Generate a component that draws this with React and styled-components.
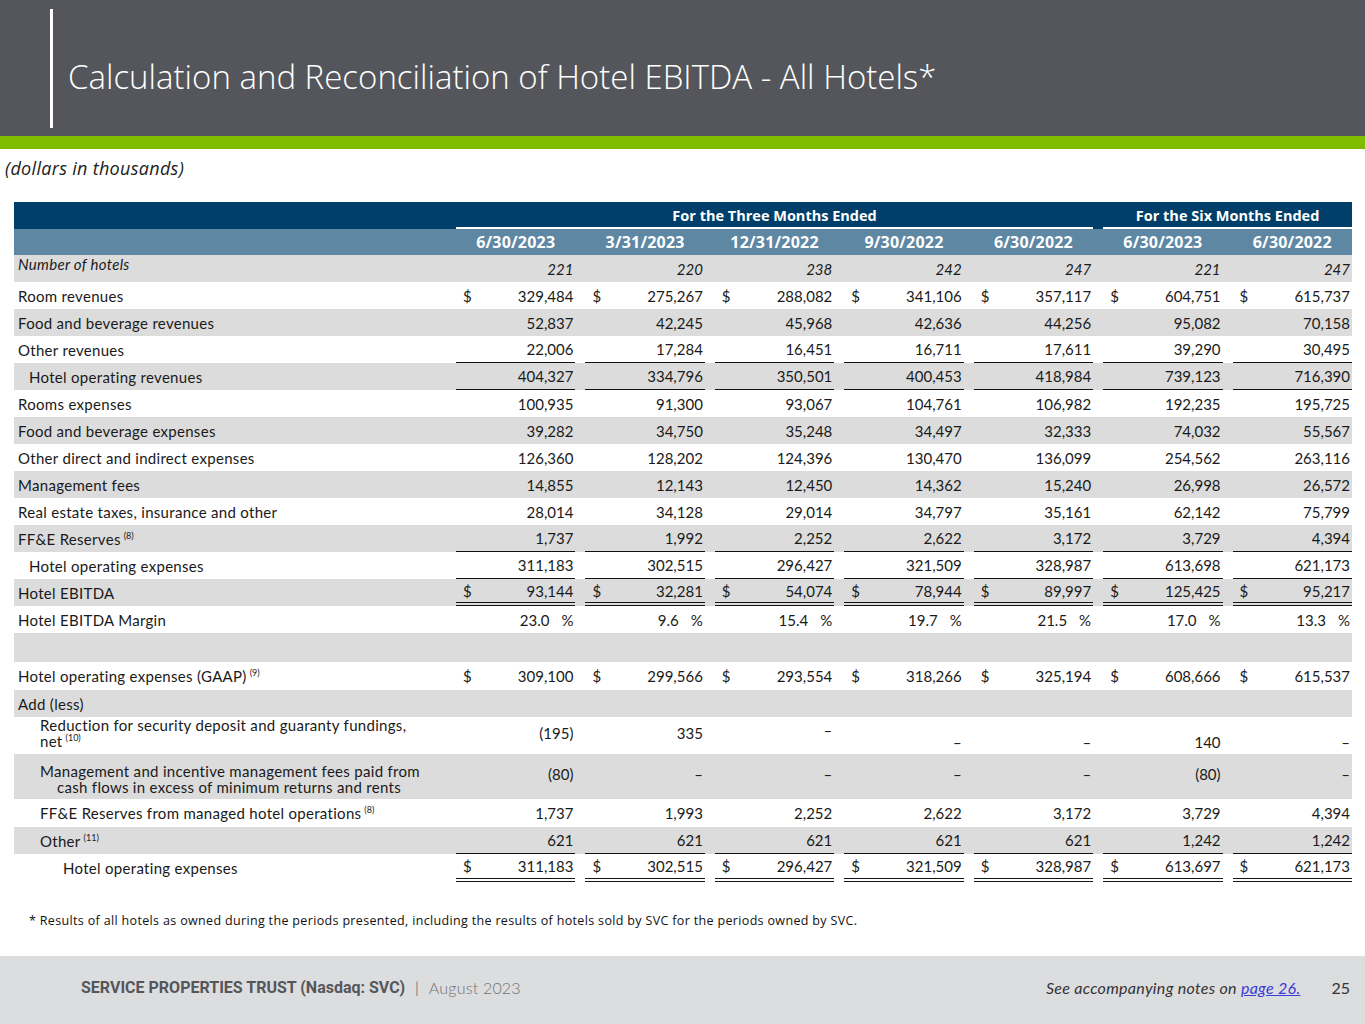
import React from 'react';
import styled, { createGlobalStyle } from 'styled-components';

const GlobalStyle = createGlobalStyle`
  html, body { margin: 0; padding: 0; background: #fff; }
  body { font-family: Lato, "Noto Sans", sans-serif; color: #1a1a1a; }
  * { box-sizing: border-box; }
`;

const Page = styled.div`
  width: 1365px;
  height: 1024px;
  display: flex;
  flex-direction: column;
  overflow: hidden;
`;

const Header = styled.header`
  height: 136px;
  background: #54565b;
  display: flex;
  align-items: center;
  padding-left: 50px;
`;

const Bar = styled.div`
  width: 3px;
  height: 119px;
  background: #fff;
  margin-right: 15px;
`;

const Title = styled.h1`
  margin: 0;
  padding-top: 16px;
  font-family: "Open Sans", sans-serif;
  font-weight: 300;
  font-size: 33px;
  color: #fff;
`;

const Accent = styled.div`
  height: 13px;
  background: #80bc00;
`;

const Subtitle = styled.div`
  padding: 7px 0 0 5px;
  font-family: "Open Sans", sans-serif;
  font-style: italic;
  font-size: 18px;
  letter-spacing: 0.3px;
  line-height: 24px;
  color: #222;
`;

const Table = styled.div`
  margin: 22px 0 0 14px;
  width: 1338px;
  display: flex;
  flex-direction: column;
`;

const GridRow = styled.div`
  display: grid;
  grid-template-columns: 432px repeat(7, 1fr);
  column-gap: 10px;
  height: ${p => p.$h || 27}px;
  background: ${p => p.$bg};
`;

const GroupCell = styled.div`
  grid-column: ${p => p.$col};
  border-bottom: 2px solid #fff;
  color: #fff;
  font-family: "Open Sans", sans-serif;
  font-weight: 700;
  font-size: 14.5px;
  display: flex;
  align-items: center;
  justify-content: center;
  padding-top: 2px;
`;

const DateCell = styled.div`
  color: #fff;
  font-family: "Open Sans", sans-serif;
  font-weight: 700;
  font-size: 16px;
  letter-spacing: 0.2px;
  display: flex;
  align-items: center;
  justify-content: center;
`;

const Label = styled.div`
  padding-left: ${p => 4 + (p.$indent || 0)}px;
  padding-top: ${p => p.$pt || 0}px;
  align-self: ${p => p.$valign || 'center'};
  font-size: 15px;
  letter-spacing: 0.3px;
  line-height: ${p => p.$lh || 18}px;
  font-style: ${p => (p.$italic ? 'italic' : 'normal')};
`;

const Hang = styled.span`
  display: block;
  padding-left: ${p => p.$hang || 0}px;
`;

const Sup = styled.sup`
  font-size: 9px;
  line-height: 0;
  margin-left: 3px;
  letter-spacing: 0;
  position: relative;
  top: 0;
`;

const ValueCell = styled.div`
  display: flex;
  justify-content: space-between;
  align-items: ${p => p.$align || 'center'};
  padding: 0 2px 0 7px;
  padding-bottom: ${p => (p.$align === 'flex-end' ? 4 : 0)}px;
  padding-top: ${p => p.$pt || 0}px;
  font-size: 15px;
  line-height: 16px;
  font-style: ${p => (p.$italic ? 'italic' : 'normal')};
  border-bottom: ${p =>
    p.$line === 'double' ? '4px double #111' : p.$line === 'single' ? '1.5px solid #111' : 'none'};
`;

const Num = styled.span`
  margin-left: auto;
  display: flex;
  gap: 12px;
`;

const Footnote = styled.div`
  margin-top: 31px;
  padding-left: 29px;
  font-family: "Open Sans", sans-serif;
  font-size: 12.5px;
  line-height: 16px;
  letter-spacing: 0.34px;
  color: #111;
`;

const Footer = styled.footer`
  margin-top: auto;
  height: 68px;
  background: #dcdddf;
  display: flex;
  align-items: center;
  padding: 0 15px 6px 81px;
`;

const Brand = styled.span`
  font-family: Roboto, sans-serif;
  font-weight: 700;
  font-size: 16px;
  color: #55565a;
`;

const Divider = styled.span`
  color: #888;
  margin: 0 10px;
  font-size: 15px;
`;

const DateText = styled.span`
  color: #707174;
  font-size: 16px;
  font-weight: 300;
  letter-spacing: 0.2px;
`;

const Notes = styled.span`
  margin-left: auto;
  font-style: italic;
  font-size: 16px;
  letter-spacing: 0.3px;
  color: #333;
`;

const Link = styled.a`
  color: #3a3ad6;
  text-decoration: underline;
`;

const PageNum = styled.span`
  margin-left: 31px;
  font-size: 16px;
  color: #333;
`;

const GRAY = '#dcdcdc';
const WHITE = '#fff';

const rows = [
  { label: 'Number of hotels', italic: true, bg: GRAY, lpt: 0, lvalign: 'flex-start', vals: ['221', '220', '238', '242', '247', '221', '247'] },
  { label: 'Room revenues', bg: WHITE, dollar: true, vals: ['329,484', '275,267', '288,082', '341,106', '357,117', '604,751', '615,737'] },
  { label: 'Food and beverage revenues', bg: GRAY, vals: ['52,837', '42,245', '45,968', '42,636', '44,256', '95,082', '70,158'] },
  { label: 'Other revenues', bg: WHITE, line: 'single', vals: ['22,006', '17,284', '16,451', '16,711', '17,611', '39,290', '30,495'] },
  { label: 'Hotel operating revenues', indent: 11, bg: GRAY, line: 'single', vals: ['404,327', '334,796', '350,501', '400,453', '418,984', '739,123', '716,390'] },
  { label: 'Rooms expenses', bg: WHITE, vals: ['100,935', '91,300', '93,067', '104,761', '106,982', '192,235', '195,725'] },
  { label: 'Food and beverage expenses', bg: GRAY, vals: ['39,282', '34,750', '35,248', '34,497', '32,333', '74,032', '55,567'] },
  { label: 'Other direct and indirect expenses', bg: WHITE, vals: ['126,360', '128,202', '124,396', '130,470', '136,099', '254,562', '263,116'] },
  { label: 'Management fees', bg: GRAY, vals: ['14,855', '12,143', '12,450', '14,362', '15,240', '26,998', '26,572'] },
  { label: 'Real estate taxes, insurance and other', bg: WHITE, vals: ['28,014', '34,128', '29,014', '34,797', '35,161', '62,142', '75,799'] },
  { label: 'FF&E Reserves', sup: '(8)', bg: GRAY, line: 'single', vals: ['1,737', '1,992', '2,252', '2,622', '3,172', '3,729', '4,394'] },
  { label: 'Hotel operating expenses', indent: 11, bg: WHITE, line: 'single', vals: ['311,183', '302,515', '296,427', '321,509', '328,987', '613,698', '621,173'] },
  { label: 'Hotel EBITDA', bg: GRAY, dollar: true, line: 'double', vals: ['93,144', '32,281', '54,074', '78,944', '89,997', '125,425', '95,217'] },
  { label: 'Hotel EBITDA Margin', bg: WHITE, pct: true, vals: ['23.0', '9.6', '15.4', '19.7', '21.5', '17.0', '13.3'] },
  { label: '', bg: GRAY, h: 29, vals: ['', '', '', '', '', '', ''] },
  { label: 'Hotel operating expenses (GAAP)', sup: '(9)', bg: WHITE, h: 28, dollar: true, vals: ['309,100', '299,566', '293,554', '318,266', '325,194', '608,666', '615,537'] },
  { label: 'Add (less)', bg: GRAY, vals: ['', '', '', '', '', '', ''] },
  {
    label: 'Reduction for security deposit and guaranty fundings,',
    label2: 'net',
    sup: '(10)',
    indent: 22,
    hang: 0,
    bg: WHITE,
    h: 37,
    lvalign: 'flex-start',
    lpt: 0,
    lh: 16,
    vals: ['(195)', '335', '–', '–', '–', '140', '–'],
    aligns: ['flex-start', 'flex-start', 'flex-start', 'flex-end', 'flex-end', 'flex-end', 'flex-end'],
    vpts: [8, 8, 5, 0, 0, 0, 0],
  },
  {
    label: 'Management and incentive management fees paid from',
    label2: 'cash flows in excess of minimum returns and rents',
    indent: 22,
    hang: 17,
    bg: GRAY,
    h: 45,
    lvalign: 'flex-start',
    lpt: 9,
    lh: 16,
    vals: ['(80)', '–', '–', '–', '–', '(80)', '–'],
    aligns: Array(7).fill('flex-start'),
    vpts: Array(7).fill(12),
  },
  { label: 'FF&E Reserves from managed hotel operations', sup: '(8)', indent: 22, bg: WHITE, h: 28, vals: ['1,737', '1,993', '2,252', '2,622', '3,172', '3,729', '4,394'] },
  { label: 'Other', sup: '(11)', indent: 22, bg: GRAY, line: 'single', vals: ['621', '621', '621', '621', '621', '1,242', '1,242'] },
  { label: 'Hotel operating expenses', indent: 45, bg: WHITE, h: 28, dollar: true, line: 'double', vals: ['311,183', '302,515', '296,427', '321,509', '328,987', '613,697', '621,173'] },
];

const dates = ['6/30/2023', '3/31/2023', '12/31/2022', '9/30/2022', '6/30/2022', '6/30/2023', '6/30/2022'];

function BodyRow({ r }) {
  return (
    <GridRow $bg={r.bg} $h={r.h}>
      <Label $indent={r.indent} $italic={r.italic} $valign={r.lvalign} $pt={r.lpt} $lh={r.lh}>
        {r.label2 ? (
          <>
            <Hang>{r.label}</Hang>
            <Hang $hang={r.hang}>
              {r.label2}
              {r.sup && <Sup>{r.sup}</Sup>}
            </Hang>
          </>
        ) : (
          <>
            {r.label}
            {r.sup && <Sup>{r.sup}</Sup>}
          </>
        )}
      </Label>
      {r.vals.map((v, i) => (
        <ValueCell
          key={i}
          $line={r.line}
          $italic={r.italic}
          $align={r.aligns ? r.aligns[i] : 'center'}
          $pt={r.vpts ? r.vpts[i] : 0}
        >
          {r.dollar && <span>$</span>}
          <Num>
            <span>{v}</span>
            {r.pct && <span>%</span>}
          </Num>
        </ValueCell>
      ))}
    </GridRow>
  );
}

export default function App() {
  return (
    <>
      <GlobalStyle />
      <Page>
        <Header>
          <Bar />
          <Title>Calculation and Reconciliation of Hotel EBITDA - All Hotels*</Title>
        </Header>
        <Accent />
        <Subtitle>(dollars in thousands)</Subtitle>
        <Table>
          <GridRow $bg="#003f69">
            <GroupCell $col="2 / span 5">For the Three Months Ended</GroupCell>
            <GroupCell $col="7 / span 2">For the Six Months Ended</GroupCell>
          </GridRow>
          <GridRow $bg="#5d87a2" $h={26}>
            <div />
            {dates.map((d, i) => (
              <DateCell key={i}>{d}</DateCell>
            ))}
          </GridRow>
          {rows.map((r, i) => (
            <BodyRow key={i} r={r} />
          ))}
        </Table>
        <Footnote>
          * Results of all hotels as owned during the periods presented, including the results of hotels sold by SVC for the periods owned by SVC.
        </Footnote>
        <Footer>
          <Brand>SERVICE PROPERTIES TRUST (Nasdaq: SVC)</Brand>
          <Divider>|</Divider>
          <DateText>August 2023</DateText>
          <Notes>
            See accompanying notes on <Link href="#">page 26.</Link>
          </Notes>
          <PageNum>25</PageNum>
        </Footer>
      </Page>
    </>
  );
}
